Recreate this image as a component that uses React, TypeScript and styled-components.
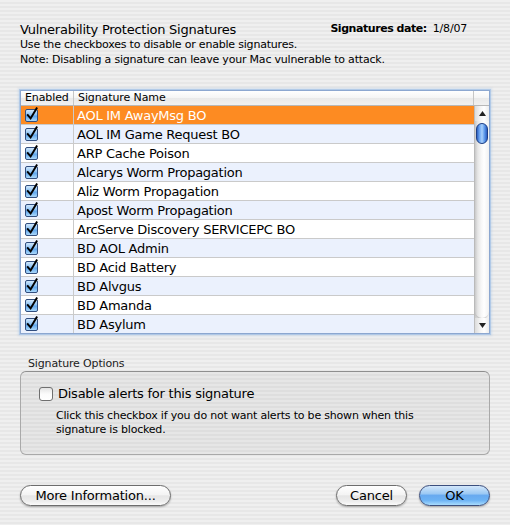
import React from "react";
import styled, { createGlobalStyle } from "styled-components";

const GlobalStyle = createGlobalStyle`
  html, body { margin: 0; padding: 0; }
  body {
    width: 510px;
    height: 525px;
    overflow: hidden;
    background: repeating-linear-gradient(to bottom, #efefef 0px, #efefef 2px, #e7e7e7 2px, #e7e7e7 4px);
    font-family: "DejaVu Sans", "Liberation Sans", sans-serif;
    color: #000;
  }
`;

const Window = styled.div`
  box-sizing: border-box;
  width: 510px;
  height: 525px;
  padding: 22px 20px 0 20px;
  display: flex;
  flex-direction: column;
`;

const TitleRow = styled.div`
  display: flex;
  justify-content: space-between;
  align-items: flex-start;
`;

const Title = styled.div`
  font-size: 13px;
  line-height: 15px;
  letter-spacing: -0.25px;
`;

const DateLabel = styled.div`
  font-size: 11px;
  line-height: 15px;
  margin-top: -1px;
  margin-right: 23px;
  letter-spacing: -0.2px;
  b { font-weight: bold; margin-right: 6px; letter-spacing: -0.45px; }
`;

const Small = styled.div`
  font-size: 11px;
  line-height: 15px;
  letter-spacing: -0.2px;
`;

const Table = styled.div`
  margin-top: 23px;
  border: 1px solid #8ca7d0;
  box-shadow: 0 0 0 1px rgba(150, 185, 230, 0.55), 0 0 2px 2px rgba(150, 185, 230, 0.3);
  background: #fff;
  display: flex;
  flex-direction: column;
`;

const HeaderRow = styled.div`
  display: grid;
  grid-template-columns: 53px 1fr 15px;
  height: 14px;
  border-bottom: 1px solid #b8b8b8;
  background: linear-gradient(to bottom, #ffffff 0%, #f4f4f4 50%, #e9e9e9 51%, #f1f1f1 100%);
  font-size: 11px;
  line-height: 14px;
  letter-spacing: -0.1px;
`;

const HeaderCell = styled.div<{ $pad?: number; $last?: boolean }>`
  padding-left: ${(p) => p.$pad ?? 4}px;
  border-right: ${(p) => (p.$last ? "none" : "1px solid #c6c6c6")};
  white-space: nowrap;
  overflow: hidden;
`;

const Body = styled.div`
  display: flex;
  height: 227px;
  overflow: hidden;
`;

const Rows = styled.div`
  flex: 1;
  display: flex;
  flex-direction: column;
`;

const Row = styled.div<{ $selected?: boolean; $alt?: boolean }>`
  display: grid;
  grid-template-columns: 53px 1fr;
  height: 18px;
  flex: none;
  border-bottom: 1px solid #cacaca;
  background: ${(p) => (p.$selected ? "#fd8b22" : p.$alt ? "#ebf1fd" : "#ffffff")};
  color: ${(p) => (p.$selected ? "#ffffff" : "#000")};
  font-size: 13px;
  line-height: 19px;
  letter-spacing: -0.25px;
`;

const CheckCell = styled.div`
  border-right: 1px solid #cacaca;
  padding-left: 4px;
  padding-top: 1px;
  box-sizing: border-box;
`;

const NameCell = styled.div`
  padding-left: 3px;
  white-space: nowrap;
  overflow: hidden;
`;

const Scrollbar = styled.div`
  width: 15px;
  flex: none;
  border-left: 1px solid #bdbdbd;
  box-sizing: border-box;
  display: flex;
  flex-direction: column;
  background: linear-gradient(to right, #c9c9c9 0%, #e6e6e6 20%, #f7f7f7 45%, #ffffff 65%, #f1f1f1 100%);
`;

const ArrowBox = styled.div<{ $h: number }>`
  height: ${(p) => p.$h}px;
  flex: none;
  display: flex;
  align-items: center;
  justify-content: center;
  background: linear-gradient(to right, #dcdcdc 0%, #f3f3f3 35%, #ffffff 65%, #ececec 100%);
`;

const Track = styled.div`
  flex: 1;
  display: flex;
  flex-direction: column;
  align-items: center;
  border-bottom-left-radius: 7px;
  border-bottom-right-radius: 7px;
  box-shadow: 0 2px 2px -1px rgba(0, 0, 0, 0.25);
`;

const Thumb = styled.div`
  margin-top: 2px;
  width: 12px;
  height: 21px;
  box-sizing: border-box;
  border: 1px solid #1d3f86;
  border-radius: 6px;
  background: linear-gradient(to right, #2d5fc0 0%, #6aa4f2 25%, #a9d0fb 50%, #5c98ea 75%, #2a5cc0 100%);
`;

const Group = styled.div`
  margin-top: 23px;
  display: flex;
  flex-direction: column;
`;

const GroupLabel = styled.div`
  font-size: 11px;
  line-height: 14px;
  padding-left: 8px;
  color: #222;
  letter-spacing: -0.15px;
`;

const GroupBox = styled.div`
  border: 1px solid #a9a9a9;
  border-top-color: #8e8e8e;
  border-radius: 6px;
  background: rgba(0, 0, 0, 0.035);
  padding: 14px 18px 17px 18px;
  display: flex;
  flex-direction: column;
`;

const CheckRow = styled.label`
  display: flex;
  align-items: center;
  height: 16px;
  gap: 5px;
  font-size: 13px;
  line-height: 16px;
  letter-spacing: -0.25px;
`;

const Description = styled.div`
  margin-top: 7px;
  margin-left: 17px;
  font-size: 11px;
  line-height: 14px;
  letter-spacing: -0.2px;
  width: 420px;
`;

const ButtonRow = styled.div`
  margin-top: 30px;
  display: flex;
  align-items: center;
  gap: 12px;
`;

const Spacer = styled.div`
  flex: 1;
`;

const Button = styled.button<{ $w: number; $primary?: boolean }>`
  width: ${(p) => p.$w}px;
  height: 21px;
  box-sizing: border-box;
  padding: 0;
  border-radius: 11px;
  font-family: "DejaVu Sans", "Liberation Sans", sans-serif;
  font-size: 13px;
  line-height: 19px;
  letter-spacing: -0.2px;
  color: #000;
  border: 1px solid ${(p) => (p.$primary ? "#3c4f7e" : "#6d6d6d")};
  box-shadow: 0 1px 2px rgba(0, 0, 0, 0.3);
  background: ${(p) =>
    p.$primary
      ? "linear-gradient(to bottom, #d3e7fb 0%, #9cc9f4 40%, #68aaf0 50%, #6cb2f4 75%, #a9dcfd 100%)"
      : "linear-gradient(to bottom, #ffffff 0%, #f4f4f4 45%, #e6e6e6 52%, #ededed 80%, #fbfbfb 100%)"};
`;

const CheckedBox: React.FC = () => (
  <svg width="15" height="16" viewBox="0 0 15 16" style={{ display: "block", overflow: "visible" }}>
    <defs>
      <linearGradient id="cbg" x1="0" y1="0" x2="0" y2="1">
        <stop offset="0" stopColor="#d7ebfd" />
        <stop offset="0.45" stopColor="#8cc2f4" />
        <stop offset="0.55" stopColor="#5fa6ec" />
        <stop offset="1" stopColor="#b3defd" />
      </linearGradient>
    </defs>
    <rect x="0.5" y="2.5" width="12" height="12" rx="1.5" fill="url(#cbg)" stroke="#324e7e" />
    <path d="M2.8 8.2 L5.6 11.4 L11.6 1.4" fill="none" stroke="#000" strokeWidth="2" strokeLinecap="square" strokeLinejoin="miter" />
  </svg>
);

const EmptyBox: React.FC = () => (
  <svg width="14" height="14" viewBox="0 0 14 14" style={{ display: "block" }}>
    <defs>
      <linearGradient id="ebg" x1="0" y1="0" x2="0" y2="1">
        <stop offset="0" stopColor="#e2e2e2" />
        <stop offset="0.5" stopColor="#fbfbfb" />
        <stop offset="1" stopColor="#ffffff" />
      </linearGradient>
    </defs>
    <rect x="0.5" y="0.5" width="13" height="13" rx="2.5" fill="url(#ebg)" stroke="#6f6f6f" />
  </svg>
);

const Arrow: React.FC<{ up?: boolean }> = ({ up }) => (
  <svg width="7" height="5" viewBox="0 0 7 5" style={{ display: "block" }}>
    <path d={up ? "M3.5 0 L7 5 L0 5 Z" : "M0 0 L7 0 L3.5 5 Z"} fill="#222" />
  </svg>
);

const signatures = [
  "AOL IM AwayMsg BO",
  "AOL IM Game Request BO",
  "ARP Cache Poison",
  "Alcarys Worm Propagation",
  "Aliz Worm Propagation",
  "Apost Worm Propagation",
  "ArcServe Discovery SERVICEPC BO",
  "BD AOL Admin",
  "BD Acid Battery",
  "BD Alvgus",
  "BD Amanda",
  "BD Asylum",
];

export default function App() {
  return (
    <>
      <GlobalStyle />
      <Window>
        <TitleRow>
          <Title>Vulnerability Protection Signatures</Title>
          <DateLabel>
            <b>Signatures date:</b>1/8/07
          </DateLabel>
        </TitleRow>
        <Small>Use the checkboxes to disable or enable signatures.</Small>
        <Small>Note: Disabling a signature can leave your Mac vulnerable to attack.</Small>

        <Table>
          <HeaderRow>
            <HeaderCell $pad={4}>Enabled</HeaderCell>
            <HeaderCell $pad={4}>Signature Name</HeaderCell>
            <HeaderCell $last />
          </HeaderRow>
          <Body>
            <Rows>
              {signatures.map((name, i) => (
                <Row key={name} $selected={i === 0} $alt={i % 2 === 1}>
                  <CheckCell>
                    <CheckedBox />
                  </CheckCell>
                  <NameCell>{name}</NameCell>
                </Row>
              ))}
            </Rows>
            <Scrollbar>
              <ArrowBox $h={15}>
                <Arrow up />
              </ArrowBox>
              <Track>
                <Thumb />
              </Track>
              <ArrowBox $h={15}>
                <Arrow />
              </ArrowBox>
            </Scrollbar>
          </Body>
        </Table>

        <Group>
          <GroupLabel>Signature Options</GroupLabel>
          <GroupBox>
            <CheckRow>
              <EmptyBox />
              Disable alerts for this signature
            </CheckRow>
            <Description>
              Click this checkbox if you do not want alerts to be shown when this
              <br />
              signature is blocked.
            </Description>
          </GroupBox>
        </Group>

        <ButtonRow>
          <Button $w={151}>More Information...</Button>
          <Spacer />
          <Button $w={71}>Cancel</Button>
          <Button $w={71} $primary>
            OK
          </Button>
        </ButtonRow>
      </Window>
    </>
  );
}
